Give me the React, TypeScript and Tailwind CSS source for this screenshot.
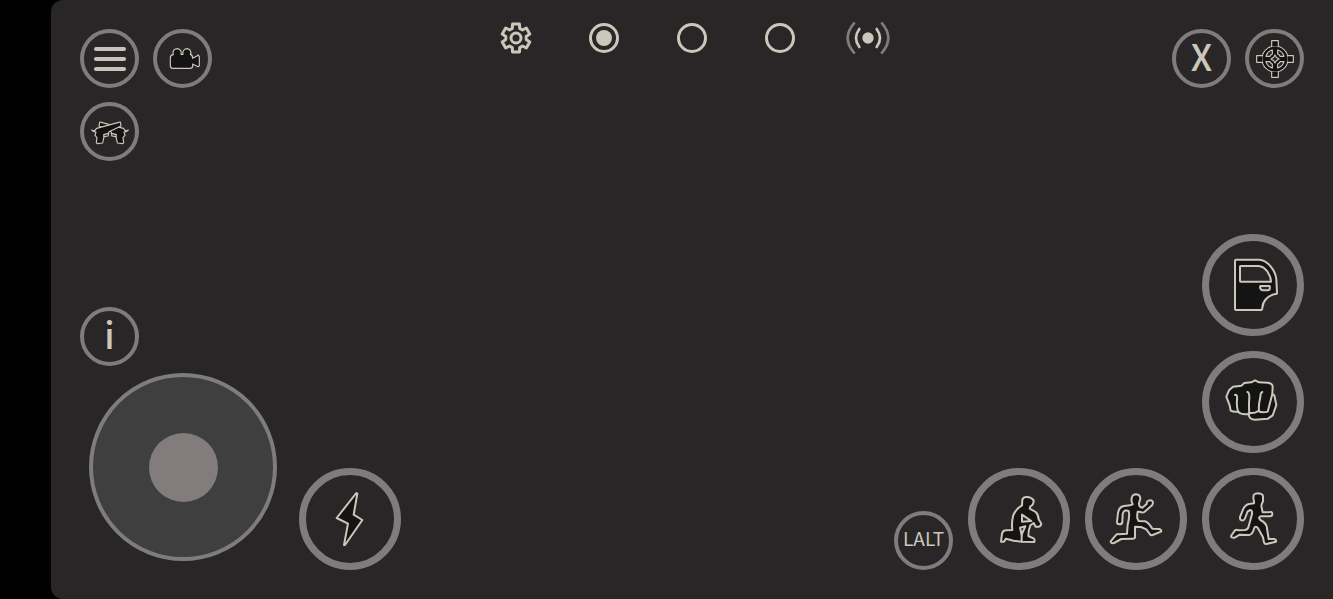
import { useState } from 'react'
import type { ReactNode } from 'react'
import clsx from 'clsx'

const GEAR_POINTS = Array.from({ length: 6 }, (_, i) => i * 60)
  .flatMap((a) => [
    [a - 21, 31],
    [a - 14, 43],
    [a + 14, 43],
    [a + 21, 31],
  ])
  .map(([deg, r]) => {
    const rad = ((deg - 90) * Math.PI) / 180
    return `${(48 + r * Math.cos(rad)).toFixed(1)},${(48 + r * Math.sin(rad)).toFixed(1)}`
  })
  .join(' ')

const PROFILES = ['Profile 1', 'Profile 2', 'Profile 3']

interface PadButtonProps {
  label: string
  large?: boolean
  className?: string
  children: ReactNode
}

const PadButton = ({ label, large, className, children }: PadButtonProps) => (
  <button
    type="button"
    aria-label={label}
    className={clsx(
      'flex shrink-0 items-center justify-center rounded-full border-[#7f7c7c] text-[#cbc7bb]',
      large ? 'size-[102px] border-[7px]' : 'size-[59px] border-4',
      className,
    )}
  >
    {children}
  </button>
)

const LargeIcon = ({ children }: { children: ReactNode }) => (
  <svg
    viewBox="0 0 180 180"
    className="size-[60px] fill-[#131413] stroke-[#cbc7bb]"
    strokeWidth={6}
    strokeLinejoin="round"
    strokeLinecap="round"
    aria-hidden
  >
    {children}
  </svg>
)

const SmallIcon = ({ children }: { children: ReactNode }) => (
  <svg
    viewBox="0 0 144 144"
    className="size-12 fill-[#131413] stroke-[#cbc7bb]"
    strokeWidth={3.5}
    strokeLinejoin="round"
    strokeLinecap="round"
    aria-hidden
  >
    {children}
  </svg>
)

const CameraIcon = () => (
  <SmallIcon>
    <path d="M34 68 Q34 60 43 59 C38 47 48 41 55 41 C64 42 69 50 66 58 H72 C69 48 77 41 84 41 C94 42 98 51 94 58 Q101 60 101 70 L114 63 L117 60 L121 64 V92 L117 95 L101 87 V92 Q101 100 93 100 H42 Q34 100 34 92 Z" />
  </SmallIcon>
)

const GUN =
  'M17 66 L24 71 L30 72 L27 82 L33 89 L31 104 L35 107 L50 105 L54 86 L53 80 L67 76 L69 71 L105 54 L103 42 L98 43 L32 61 L25 69 Z'

const GunsIcon = () => (
  <SmallIcon>
    <path d={GUN} transform="translate(144 0) scale(-1 1)" />
    <path d={GUN} />
    <path className="fill-none" d="M54 86 L66 84 L68 77 M90 86 L78 84 L76 77" />
  </SmallIcon>
)

const CrosshairIcon = () => (
  <SmallIcon>
    <circle cx="72" cy="72" r="39" />
    <path d="M62 17 H82 V36 H62 Z M62 108 H82 V127 H62 Z M17 62 H36 V82 H17 Z M108 62 H127 V82 H108 Z" />
    <circle cx="72" cy="72" r="37" className="stroke-none" />
    <path
      className="fill-[#282627]"
      d="M64 45 V57 Q59 59 57 64 H45 Q49 49 64 45 Z M80 45 V57 Q85 59 87 64 H99 Q95 49 80 45 Z M64 99 V87 Q59 85 57 80 H45 Q49 95 64 99 Z M80 99 V87 Q85 85 87 80 H99 Q95 95 80 99 Z"
    />
    <path d="M72 60 L76 67 L84 72 L76 77 L72 84 L68 77 L60 72 L68 67 Z" className="fill-[#282627]" />
  </SmallIcon>
)

const DoorIcon = () => (
  <LargeIcon>
    <path d="M39 14 H108 C136 14 159 52 160 74 L162 113 Q162 117 157 117 C134 122 119 138 118 158 Q118 165 112 165 H39 Q36 165 36 162 V17 Q36 14 39 14 Z" />
    <path className="fill-[#282627]" d="M53 33 H106 C128 34 143 60 144 80 H53 Q51 80 51 78 V35 Q51 33 53 33 Z" />
    <path className="fill-[#282627]" d="M112 93 H140 Q143 106 134 106 H120 Q112 106 111 95 Z" />
  </LargeIcon>
)

const FistIcon = () => (
  <LargeIcon>
    <path d="M10 74 L18 55 L30 44 L55 41 L64 33 L85 31 L96 25 L108 31 L134 32 Q149 34 149 44 L148 66 L154 70 L160 99 L149 130 L135 140 L95 143 Q78 142 77 126 Q62 128 52 124 L45 119 Q31 120 23 116 L20 100 Z" />
    <path
      className="fill-none"
      d="M36 69 Q44 66 42 84 Q40 105 46 120 M73 60 Q79 61 79 76 Q77 100 79 126 M118 60 Q112 62 112 76 Q106 100 108 115 M77 122 Q94 126 105 117 Q118 124 134 119 L148 66"
    />
  </LargeIcon>
)

const RunIcon = () => (
  <LargeIcon>
    <path d="M92 18 Q96 13 106 13 Q119 14 120 22 V37 Q116 43 115 51 L119 70 L135 70 Q148 66 148 74 Q148 82 140 82 H112 L108 86 L112 93 Q128 101 131 112 L137 150 L154 150 Q161 153 159 158 L130 165 Q125 166 123 160 L120 145 L108 123 Q104 113 98 113 Q94 113 92 122 Q88 136 78 138 L50 137 L35 146 Q24 147 24 141 L36 124 Q40 121 46 124 L66 123 Q76 121 77 112 L87 76 Q88 63 82 63 L74 67 L65 90 Q63 95 56 94 Q50 93 51 84 L60 62 Q67 45 82 44 L93 43 V36 Q90 33 92 18 Z" />
  </LargeIcon>
)

const LeapIcon = () => (
  <LargeIcon>
    <path d="M77 28 Q79 16 90 16 Q103 17 103 29 L99 43 Q98 52 105 55 L109 56 L122 45 L123 38 Q131 31 139 36 Q143 42 138 49 L115 69 Q110 73 100 68 L95 68 Q93 78 94 88 L98 96 L117 97 Q126 99 139 119 L160 120 Q168 123 165 128 L140 138 Q133 140 129 132 L121 121 L105 114 L87 113 L87 144 Q87 149 80 149 L46 150 L24 162 Q14 164 14 157 L29 139 Q33 133 39 136 L63 134 L65 107 Q72 80 68 66 L59 64 Q51 67 50 75 L49 99 Q48 106 40 106 Q32 105 33 98 L36 72 Q39 53 54 51 L72 49 L80 46 Q75 37 77 28 Z" />
  </LargeIcon>
)

const KneelIcon = () => (
  <LargeIcon>
    <path d="M100 32 Q103 23 114 24 Q128 25 134 34 Q134 49 124 52 L122 59 L140 69 Q148 76 149 91 L157 104 Q156 112 149 113 L140 113 L134 102 L124 109 Q118 123 118 141 L135 149 Q138 154 136 159 L98 158 L74 155 L51 149 L45 158 L36 158 L39 134 Q42 124 50 124 L70 123 Q67 99 73 78 Q81 60 99 49 Z" />
    <path className="fill-[#282627]" d="M99 77 V98 L127 96 Z M93 116 L109 112 L98 137 Z" />
    <path d="M98 137 V157" />
  </LargeIcon>
)

const BoltIcon = () => (
  <LargeIcon>
    <path d="M109 12 L112 14 L101 77 L127 93 L75 168 L72 168 L84 104 L50 87 Z" />
  </LargeIcon>
)

const TopBar = () => {
  const [profile, setProfile] = useState(PROFILES[0])

  return (
    <div className="flex gap-11">
      <button type="button" aria-label="Settings" className="flex h-8 w-11 items-center justify-center">
        <svg viewBox="0 0 96 96" className="size-8 fill-none stroke-[#cbc7bb]" strokeWidth={9} strokeLinejoin="round">
          <polygon points={GEAR_POINTS} />
          <circle cx="48" cy="48" r="15" />
        </svg>
      </button>
      {PROFILES.map((name) => (
        <label key={name} className="flex h-8 w-11 items-center justify-center">
          <input
            type="radio"
            name="profile"
            aria-label={name}
            checked={profile === name}
            onChange={() => setProfile(name)}
            className="flex size-[30px] appearance-none items-center justify-center rounded-full border-3 border-[#cbc7bb] before:size-4 before:rounded-full checked:before:bg-[#cbc7bb]"
          />
        </label>
      ))}
      <button type="button" aria-label="Connection" className="h-8 w-11">
        <svg viewBox="0 0 132 96" className="h-8 w-11 fill-none" strokeWidth={8} strokeLinecap="round">
          <circle cx="66" cy="48" r="17" className="fill-[#cbc7bb]" />
          <path className="stroke-[#cbc7bb]" d="M40 21 Q20 48 40 75 M92 21 Q112 48 92 75" />
          <path className="stroke-[#7f7c7c]" d="M24 4 Q-14 48 24 92 M108 4 Q146 48 108 92" />
        </svg>
      </button>
    </div>
  )
}

const App = () => (
  <div className="min-h-screen bg-black pl-[51px] font-['Noto_Sans_CJK_SC',sans-serif]">
    <main className="flex min-h-screen flex-col justify-between rounded-l-xl bg-[#282627] px-[29px] pb-[29px] pt-[22px]">
      <header className="grid grid-cols-[1fr_auto_1fr] items-start">
        <div className="flex flex-col gap-[14px] pt-[7px]">
          <div className="flex gap-[14px]">
            <PadButton label="Menu">
              <span className="flex w-8 flex-col gap-1.5">
                <span className="h-1 rounded-full bg-[#cbc2bb]" />
                <span className="h-1 rounded-full bg-[#cbc2bb]" />
                <span className="h-1 rounded-full bg-[#cbc2bb]" />
              </span>
            </PadButton>
            <PadButton label="Camera">
              <CameraIcon />
            </PadButton>
          </div>
          <PadButton label="Weapons">
            <GunsIcon />
          </PadButton>
        </div>
        <TopBar />
        <div className="flex justify-end gap-[14px] pt-[7px]">
          <PadButton label="X" className="pb-2 text-4xl font-medium">
            X
          </PadButton>
          <PadButton label="Aim">
            <CrosshairIcon />
          </PadButton>
        </div>
      </header>

      <div className="flex items-end justify-between">
        <div className="flex items-end gap-[22px]">
          <div className="flex flex-col gap-[7px] pb-[9px]">
            <PadButton label="Info" className="pb-2 text-4xl font-medium">
              i
            </PadButton>
            <div className="ml-[9px] flex size-[188px] items-center justify-center rounded-full border-4 border-[#7f7c7c] bg-[#3f3f3f]">
              <button type="button" aria-label="Joystick" className="size-[69px] rounded-full bg-[#827d7c]" />
            </div>
          </div>
          <PadButton label="Boost" large>
            <BoltIcon />
          </PadButton>
        </div>

        <div className="flex flex-col items-end gap-[15px]">
          <PadButton label="Vehicle door" large>
            <DoorIcon />
          </PadButton>
          <PadButton label="Punch" large>
            <FistIcon />
          </PadButton>
          <div className="flex items-end gap-[15px]">
            <PadButton label="LALT" className="pb-1 text-[19px]">
              LALT
            </PadButton>
            <PadButton label="Crouch" large>
              <KneelIcon />
            </PadButton>
            <PadButton label="Jump" large>
              <LeapIcon />
            </PadButton>
            <PadButton label="Sprint" large>
              <RunIcon />
            </PadButton>
          </div>
        </div>
      </div>
    </main>
  </div>
)

export default App
